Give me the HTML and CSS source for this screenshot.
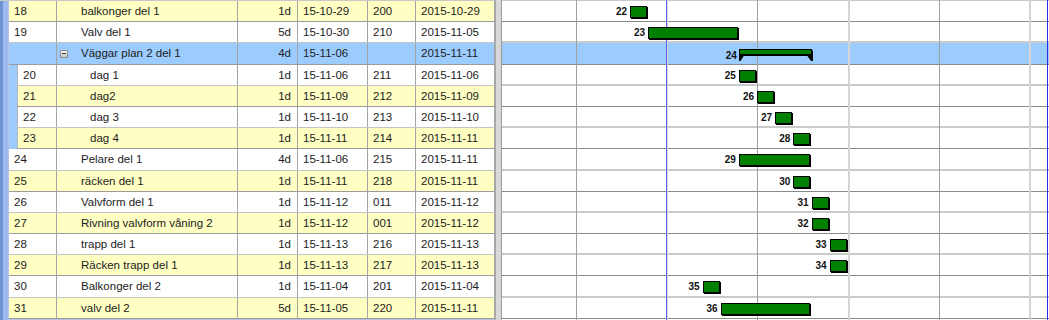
FILE: index.html
```html
<!DOCTYPE html>
<html lang="sv">
<head>
    <meta charset="UTF-8">
    <title>Tidplan</title>
    <link rel="stylesheet" href="styles.css">
</head>
<body>
    <div class="gantt">
        <div class="grid">
            <div class="row alt"><div class="c-id">18</div><div class="c-name">balkonger del 1</div><div class="c-dur">1d</div><div class="c-start">15-10-29</div><div class="c-code">200</div><div class="c-end">2015-10-29</div></div>
            <div class="row"><div class="c-id">19</div><div class="c-name">Valv del 1</div><div class="c-dur">5d</div><div class="c-start">15-10-30</div><div class="c-code">210</div><div class="c-end">2015-11-05</div></div>
            <div class="row alt summary"><div class="c-id"></div><div class="c-name"><span class="toggle"></span>Väggar plan 2 del 1</div><div class="c-dur">4d</div><div class="c-start">15-11-06</div><div class="c-code"></div><div class="c-end">2015-11-11</div></div>
            <div class="subtasks">
                <div class="row"><div class="c-id">20</div><div class="c-name">dag 1</div><div class="c-dur">1d</div><div class="c-start">15-11-06</div><div class="c-code">211</div><div class="c-end">2015-11-06</div></div>
                <div class="row alt"><div class="c-id">21</div><div class="c-name">dag2</div><div class="c-dur">1d</div><div class="c-start">15-11-09</div><div class="c-code">212</div><div class="c-end">2015-11-09</div></div>
                <div class="row"><div class="c-id">22</div><div class="c-name">dag 3</div><div class="c-dur">1d</div><div class="c-start">15-11-10</div><div class="c-code">213</div><div class="c-end">2015-11-10</div></div>
                <div class="row alt"><div class="c-id">23</div><div class="c-name">dag 4</div><div class="c-dur">1d</div><div class="c-start">15-11-11</div><div class="c-code">214</div><div class="c-end">2015-11-11</div></div>
            </div>
            <div class="row"><div class="c-id">24</div><div class="c-name">Pelare del 1</div><div class="c-dur">4d</div><div class="c-start">15-11-06</div><div class="c-code">215</div><div class="c-end">2015-11-11</div></div>
            <div class="row alt"><div class="c-id">25</div><div class="c-name">räcken del 1</div><div class="c-dur">1d</div><div class="c-start">15-11-11</div><div class="c-code">218</div><div class="c-end">2015-11-11</div></div>
            <div class="row"><div class="c-id">26</div><div class="c-name">Valvform del 1</div><div class="c-dur">1d</div><div class="c-start">15-11-12</div><div class="c-code">011</div><div class="c-end">2015-11-12</div></div>
            <div class="row alt"><div class="c-id">27</div><div class="c-name">Rivning valvform våning 2</div><div class="c-dur">1d</div><div class="c-start">15-11-12</div><div class="c-code">001</div><div class="c-end">2015-11-12</div></div>
            <div class="row"><div class="c-id">28</div><div class="c-name">trapp del 1</div><div class="c-dur">1d</div><div class="c-start">15-11-13</div><div class="c-code">216</div><div class="c-end">2015-11-13</div></div>
            <div class="row alt"><div class="c-id">29</div><div class="c-name">Räcken trapp del 1</div><div class="c-dur">1d</div><div class="c-start">15-11-13</div><div class="c-code">217</div><div class="c-end">2015-11-13</div></div>
            <div class="row"><div class="c-id">30</div><div class="c-name">Balkonger del 2</div><div class="c-dur">1d</div><div class="c-start">15-11-04</div><div class="c-code">201</div><div class="c-end">2015-11-04</div></div>
            <div class="row alt"><div class="c-id">31</div><div class="c-name">valv del 2</div><div class="c-dur">5d</div><div class="c-start">15-11-05</div><div class="c-code">220</div><div class="c-end">2015-11-11</div></div>
        </div>

        <div class="splitter"></div>

        <div class="chart">
            <!-- week lines, one per monday (18.15px per working day) -->
            <div class="week" style="left:73.5px"></div>
            <div class="week light" style="left:164.2px"></div>
            <div class="week" style="left:255px"></div>
            <div class="week light" style="left:345.7px"></div>
            <div class="week" style="left:436.5px"></div>
            <div class="week light" style="left:527.2px"></div>
            <div class="marker" style="left:164px"></div>
            <div class="marker edge" style="left:545px"></div>

            <div class="crow alt"><div class="bar" style="left:128px;width:17px"><span class="bar-label">22</span></div></div>
            <div class="crow"><div class="bar" style="left:146.1px;width:89.7px"><span class="bar-label">23</span></div></div>
            <div class="crow alt summary">
                <div class="sbar" style="left:236.9px">
                    <span class="bar-label">24</span>
                    <svg width="75" height="13" viewBox="0 0 75 13">
                        <path d="M1.5 1.5H74V7H1.5Z" fill="#000"/>
                        <rect x="0.5" y="0.5" width="72" height="5" fill="#008000" stroke="#000"/>
                        <path d="M0 5H6L1.5 12H0Z" fill="#000"/>
                        <path d="M67 5H74V12H72Z" fill="#000"/>
                    </svg>
                </div>
            </div>
            <div class="crow"><div class="bar" style="left:236.9px;width:17px"><span class="bar-label">25</span></div></div>
            <div class="crow alt"><div class="bar" style="left:255px;width:17px"><span class="bar-label">26</span></div></div>
            <div class="crow"><div class="bar" style="left:273.2px;width:17px"><span class="bar-label">27</span></div></div>
            <div class="crow alt"><div class="bar" style="left:291.3px;width:17px"><span class="bar-label">28</span></div></div>
            <div class="crow"><div class="bar" style="left:236.9px;width:71.6px"><span class="bar-label">29</span></div></div>
            <div class="crow alt"><div class="bar" style="left:291.3px;width:17px"><span class="bar-label">30</span></div></div>
            <div class="crow"><div class="bar" style="left:309.5px;width:17px"><span class="bar-label">31</span></div></div>
            <div class="crow alt"><div class="bar" style="left:309.5px;width:17px"><span class="bar-label">32</span></div></div>
            <div class="crow"><div class="bar" style="left:327.6px;width:17px"><span class="bar-label">33</span></div></div>
            <div class="crow alt"><div class="bar" style="left:327.6px;width:17px"><span class="bar-label">34</span></div></div>
            <div class="crow"><div class="bar" style="left:200.6px;width:17px"><span class="bar-label">35</span></div></div>
            <div class="crow alt"><div class="bar" style="left:218.7px;width:89.7px"><span class="bar-label">36</span></div></div>
        </div>
    </div>
</body>
</html>
```

FILE: styles.css
```css
body {
    margin: 0;
    font-family: "Liberation Sans", Arial, sans-serif;
    font-size: 11.5px;
    color: #1c1c1c;
    background: #fff;
}

.gantt {
    display: flex;
    width: 1049px;
    height: 320px;
    overflow: hidden;
}

/* task table */
.grid {
    flex: none;
    width: 495px;
    box-sizing: border-box;
    padding-left: 9px;
    border-top: 1px solid #c8c8c8;
    background: linear-gradient(90deg, #7191d5 0 3px, #9db9ef 3px 8px, #b4c4e2 8px 9px);
}

.row {
    display: flex;
    height: 21.2px;
    box-sizing: border-box;
    border-bottom: 1px solid #c4c4c4;
    background: #fff;
}

.row.alt {
    background: #ffffc4;
    border-bottom-color: #9c9c9c;
}

.row.summary {
    background: #9ccbfe;
}

.row > div {
    box-sizing: border-box;
    padding: 0 5px;
    border-right: 1px solid #a4a4a4;
    line-height: 20px;
    white-space: nowrap;
    overflow: hidden;
}

.row .c-id { width: 48px; }
.row .c-name { width: 181px; padding-left: 24px; }
.row .c-dur { width: 60px; text-align: right; padding-right: 6px; }
.row .c-start { width: 70px; }
.row .c-code { width: 48px; }
.row .c-end { width: 79px; }

.summary .c-name {
    padding-left: 3px;
}

.toggle {
    display: inline-block;
    position: relative;
    width: 8px;
    height: 8px;
    margin-right: 13px;
    vertical-align: -1px;
    box-sizing: border-box;
    border: 1px solid #8c8c8c;
    border-radius: 1px;
    background: linear-gradient(#fdfdfd, #c4c4c4);
}

.toggle::after {
    content: "";
    position: absolute;
    left: 1px;
    top: 2px;
    width: 4px;
    height: 1px;
    background: #333;
}

.subtasks {
    padding-left: 8px;
    background: #9ccbfe;
}

.subtasks .c-id {
    width: 40px;
    border-left: 1px solid #b4b4b4;
}

.subtasks .c-name {
    padding-left: 33px;
}

.splitter {
    flex: none;
    width: 7px;
    box-sizing: border-box;
    background: #d8d8d8;
    border-left: 1px solid #a8a8a8;
    border-right: 1px solid #9a9a9a;
}

/* chart */
.chart {
    position: relative;
    flex: 1;
    border-top: 1px solid #c8c8c8;
}

.crow {
    position: relative;
    height: 21.2px;
    box-sizing: border-box;
    border-bottom: 2px solid #cacaca;
}

.crow.alt {
    border-bottom: 1px solid #8a8a8a;
}

.crow.summary {
    background: #9ccbfe;
}

.week {
    position: absolute;
    top: -1px;
    bottom: 0;
    width: 1px;
    background: #a0a0a0;
    z-index: 1;
}

.week.light {
    width: 2px;
    background: #d4d4d4;
}

.marker {
    position: absolute;
    top: -1px;
    bottom: 0;
    width: 1px;
    background: #6262ff;
    z-index: 1;
}

.marker.edge {
    background: #2a2ae0;
}

.bar {
    position: absolute;
    top: 5px;
    height: 12px;
    box-sizing: border-box;
    background: #008000;
    border: 1px solid #000;
    box-shadow: 1px 1px 0 #000;
    z-index: 2;
}

.sbar {
    position: absolute;
    top: 6px;
    height: 13px;
    z-index: 2;
}

.sbar svg {
    display: block;
}

.bar-label {
    position: absolute;
    right: 100%;
    top: -1px;
    margin-right: 4px;
    font-size: 10px;
    font-weight: bold;
    line-height: 12px;
    color: #111;
}

.sbar .bar-label {
    top: 1px;
    margin-right: 2px;
}
```
